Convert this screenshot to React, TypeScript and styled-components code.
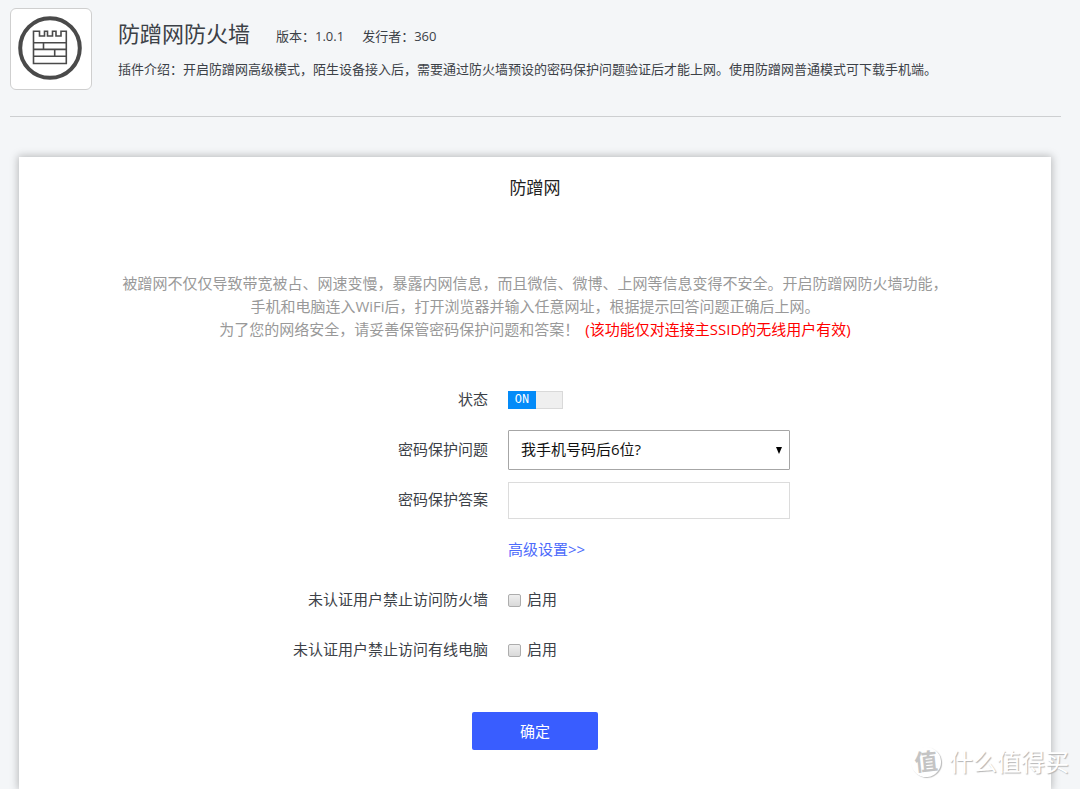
import React, { useState } from "react";
import styled, { createGlobalStyle } from "styled-components";

const GlobalStyle = createGlobalStyle`
  *, *::before, *::after { box-sizing: border-box; }
  body {
    margin: 0;
    background: #f4f6f8;
    color: #3c4147;
    font-family: "Open Sans", "Noto Sans CJK SC", sans-serif;
    font-size: 15px;
  }
`;

const Page = styled.div`
  position: relative;
  display: flex;
  flex-direction: column;
  min-height: 100vh;
  padding: 8px 19px 0 10px;
  overflow: hidden;
`;

const Header = styled.header`
  display: flex;
  gap: 26px;
  padding-bottom: 26px;
  border-bottom: 1px solid #cdcfd1;
`;

const PluginIcon = styled.div`
  display: flex;
  flex: none;
  align-items: center;
  justify-content: center;
  width: 82px;
  height: 82px;
  padding: 0 2px 2px 0;
  border: 1px solid #cfcfcf;
  border-radius: 6px;
  background: #fff;
`;

const Info = styled.div`
  padding-top: 8px;
`;

const TitleLine = styled.div`
  display: flex;
  align-items: center;
  height: 34px;
`;

const PluginName = styled.h1`
  margin: 0 26px 0 0;
  font-size: 22px;
  font-weight: 400;
  line-height: 34px;
`;

const Meta = styled.span`
  margin-right: 18px;
  padding-top: 4px;
  font-size: 13px;
`;

const Description = styled.p`
  margin: 9px 0 0;
  font-size: 13px;
  line-height: 20px;
`;

const Card = styled.main`
  flex: 1;
  margin: 40px 10px 0 9px;
  padding: 16px 20px 39px;
  background: #fff;
  box-shadow: 0 0 8px 1px rgba(0, 0, 0, 0.25);
`;

const CardTitle = styled.h2`
  margin: 0;
  color: #222;
  font-size: 17px;
  font-weight: 400;
  line-height: 30px;
  text-align: center;
`;

const Notice = styled.p`
  margin: 69px 0 34px;
  color: #999;
  line-height: 23px;
  text-align: center;
`;

const Warning = styled.span`
  margin-left: 6px;
  color: #f00;
`;

const Row = styled.div`
  display: grid;
  grid-template-columns: calc(50% - 47px) 1fr;
  column-gap: 20px;
  align-items: center;
  height: 50px;
`;

const RowLabel = styled.label`
  padding-bottom: 4px;
  text-align: right;
`;

const AdvancedLink = styled.a`
  grid-column: 2;
  padding-bottom: 4px;
  color: #4d6bfb;
  text-decoration: none;
`;

const Switch = styled.label`
  display: flex;
  position: relative;
  width: 55px;
  height: 18px;
  border: 1px solid #d9d9d9;
  background: #efefef;
  cursor: pointer;
`;

const SwitchInput = styled.input`
  position: absolute;
  inset: 0;
  margin: 0;
  opacity: 0;
`;

const SwitchText = styled.span<{ $on: boolean }>`
  width: 28px;
  margin: -1px;
  margin-left: ${(p) => (p.$on ? "-1px" : "26px")};
  background: ${(p) => (p.$on ? "#048bf8" : "#bbb")};
  color: #fff;
  font-family: "Liberation Mono", monospace;
  font-size: 12px;
  line-height: 18px;
  text-align: center;
`;

const SelectWrap = styled.div`
  position: relative;
  width: 282px;
  &::after {
    content: "";
    position: absolute;
    top: 17px;
    right: 8px;
    border: solid transparent;
    border-width: 7px 3px 0;
    border-top-color: #000;
    pointer-events: none;
  }
`;

const Select = styled.select`
  display: block;
  width: 100%;
  height: 40px;
  padding: 0 12px 2px;
  border: 1px solid #a6a6a6;
  border-radius: 1px;
  appearance: none;
  background: #fff;
  color: #111;
  font: inherit;
`;

const TextInput = styled.input`
  width: 282px;
  height: 37px;
  padding: 0 12px;
  border: 1px solid #dcdcdc;
  font: inherit;
`;

const CheckLabel = styled.label`
  display: flex;
  gap: 6px;
  align-items: center;
`;

const CheckText = styled.span`
  padding-bottom: 4px;
`;

const Checkbox = styled.input`
  width: 13px;
  height: 13px;
  margin: 0;
  border: 1px solid #adadad;
  border-radius: 2px;
  appearance: none;
  background: linear-gradient(#efefef, #d9d9d9);
  &:checked {
    background: #395dff;
  }
`;

const Submit = styled.button`
  display: block;
  width: 126px;
  height: 38px;
  margin: 37px auto 0;
  padding: 0 0 2px;
  border: 0;
  border-radius: 2px;
  background: #395dff;
  color: #fff;
  font: inherit;
  cursor: pointer;
`;

const Watermark = styled.div`
  display: flex;
  position: absolute;
  right: 11px;
  bottom: 10px;
  gap: 8px;
  align-items: center;
  color: #fff;
  font-size: 24px;
  line-height: 34px;
  text-shadow: 1px 1px 1px #b4b4b4;
  pointer-events: none;
`;

const WatermarkSeal = styled.span`
  width: 30px;
  height: 30px;
  border-radius: 50%;
  box-shadow: 1px 1px 1px #bcbcbc;
  color: #c4c4c4;
  font-size: 23px;
  font-weight: 700;
  line-height: 29px;
  text-align: center;
  text-shadow: none;
  transform: rotate(-6deg);
`;

function CastleIcon() {
  return (
    <svg width="64" height="64" viewBox="0 0 64 64" fill="none" stroke="#4a4a4a" aria-hidden="true">
      <circle cx="32" cy="32" r="29.8" strokeWidth="4" />
      <path
        strokeWidth="1.6"
        d="M15.5 47.5V15.2H21.5V20H26.5V15.2H29.5V20H34.5V15.2H38V20H43V15.2H48.3V47.5ZM15.5 26.7H48.3M15.5 33.4H48.3M15.5 40.2H48.3M25.5 26.7V33.4M36.7 33.4V40.2"
      />
    </svg>
  );
}

function EnableRow({ id, label }: { id: string; label: string }) {
  return (
    <Row>
      <RowLabel htmlFor={id}>{label}</RowLabel>
      <CheckLabel>
        <Checkbox id={id} type="checkbox" />
        <CheckText>启用</CheckText>
      </CheckLabel>
    </Row>
  );
}

export default function App() {
  const [on, setOn] = useState(true);

  return (
    <>
      <GlobalStyle />
      <Page>
        <Header>
          <PluginIcon>
            <CastleIcon />
          </PluginIcon>
          <Info>
            <TitleLine>
              <PluginName>防蹭网防火墙</PluginName>
              <Meta>版本：1.0.1</Meta>
              <Meta>发行者：360</Meta>
            </TitleLine>
            <Description>
              插件介绍：开启防蹭网高级模式，陌生设备接入后，需要通过防火墙预设的密码保护问题验证后才能上网。使用防蹭网普通模式可下载手机端。
            </Description>
          </Info>
        </Header>
        <Card>
          <CardTitle>防蹭网</CardTitle>
          <Notice>
            被蹭网不仅仅导致带宽被占、网速变慢，暴露内网信息，而且微信、微博、上网等信息变得不安全。开启防蹭网防火墙功能，
            <br />
            手机和电脑连入WiFi后，打开浏览器并输入任意网址，根据提示回答问题正确后上网。
            <br />
            为了您的网络安全，请妥善保管密码保护问题和答案！
            <Warning>(该功能仅对连接主SSID的无线用户有效)</Warning>
          </Notice>
          <form onSubmit={(e) => e.preventDefault()}>
            <Row>
              <RowLabel htmlFor="status">状态</RowLabel>
              <Switch>
                <SwitchInput
                  id="status"
                  type="checkbox"
                  role="switch"
                  checked={on}
                  onChange={(e) => setOn(e.target.checked)}
                />
                <SwitchText $on={on}>{on ? "ON" : "OFF"}</SwitchText>
              </Switch>
            </Row>
            <Row>
              <RowLabel htmlFor="question">密码保护问题</RowLabel>
              <SelectWrap>
                <Select id="question">
                  <option>我手机号码后6位?</option>
                </Select>
              </SelectWrap>
            </Row>
            <Row>
              <RowLabel htmlFor="answer">密码保护答案</RowLabel>
              <TextInput id="answer" type="text" />
            </Row>
            <Row>
              <AdvancedLink href="#advanced">高级设置&gt;&gt;</AdvancedLink>
            </Row>
            <EnableRow id="block-firewall" label="未认证用户禁止访问防火墙" />
            <EnableRow id="block-wired" label="未认证用户禁止访问有线电脑" />
            <Submit type="submit">确定</Submit>
          </form>
        </Card>
        <Watermark>
          <WatermarkSeal>值</WatermarkSeal>
          <span>什么值得买</span>
        </Watermark>
      </Page>
    </>
  );
}
